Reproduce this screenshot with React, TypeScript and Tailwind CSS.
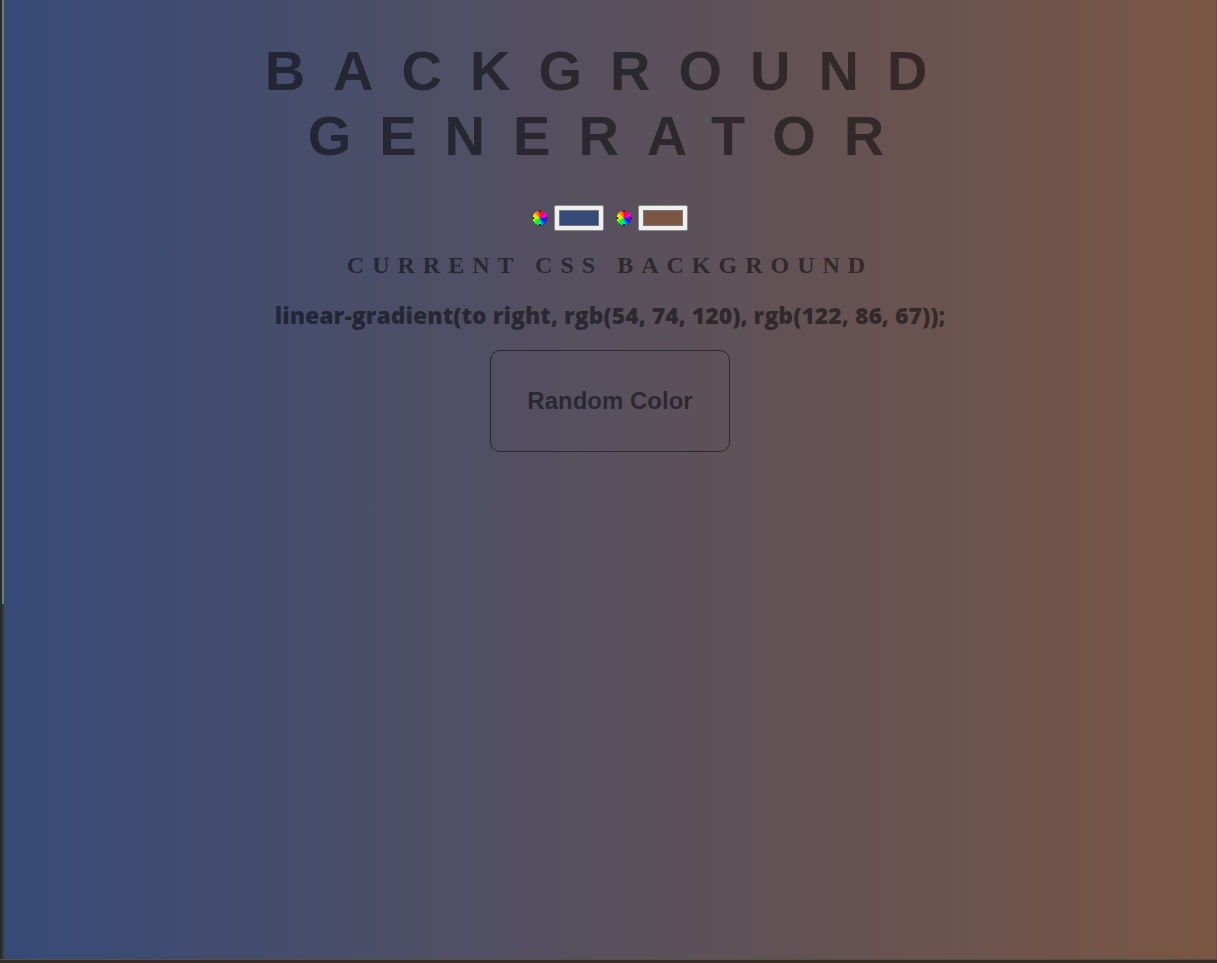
import { useState } from "react";

type Pair = [string, string];

const toRgb = (hex: string) => {
  const n = parseInt(hex.slice(1), 16);
  return `rgb(${n >> 16}, ${(n >> 8) & 255}, ${n & 255})`;
};

const randomHex = () =>
  "#" + Math.floor(Math.random() * 0x1000000).toString(16).padStart(6, "0");

const wheel = [
  "#ff0040", "#ff0090", "#ff00e0", "#c000ff", "#5000ff", "#0030ff",
  "#0090ff", "#00e0d0", "#00f060", "#20ff00", "#90ff00", "#e8ff00",
  "#ffd800", "#ff9000", "#ff4800",
];
const slice = (2 * Math.PI) / wheel.length;
const point = (angle: number) => `${8 + 7.3 * Math.cos(angle)} ${8 + 7.3 * Math.sin(angle)}`;

function ColorWheel() {
  return (
    <svg viewBox="0 0 16 16" className="size-4" aria-hidden="true">
      <ellipse cx="8" cy="12.8" rx="4.5" ry="3" fill="#000" opacity="0.6" />
      {wheel.map((fill, i) => {
        const start = i * slice - Math.PI / 2;
        return <path key={fill} fill={fill} d={`M8 8L${point(start)}A7.3 7.3 0 0 1 ${point(start + slice + 0.05)}Z`} />;
      })}
      <path d="M8 0.5v1.6M8 13.9v1.6M0.5 8h1.6M13.9 8h1.6" stroke="#1a1a1a" strokeWidth="2" />
    </svg>
  );
}

function ColorField({ label, value, onChange }: { label: string; value: string; onChange: (v: string) => void }) {
  return (
    <label className="flex items-center gap-1.5">
      <ColorWheel />
      <input
        type="color"
        aria-label={label}
        value={value}
        onChange={(e) => onChange(e.target.value)}
        className="block h-[26px] w-[50px] appearance-none rounded-[2px] border border-[#8c8a8c] bg-[#efefef] px-1 py-1 [&::-webkit-color-swatch-wrapper]:p-0 [&::-webkit-color-swatch]:rounded-none [&::-webkit-color-swatch]:border [&::-webkit-color-swatch]:border-solid [&::-webkit-color-swatch]:border-[#777777]"
      />
    </label>
  );
}

export default function App() {
  const [[left, right], setColors] = useState<Pair>(["#364a78", "#7a5643"]);
  const gradient = `linear-gradient(to right, ${toRgb(left)}, ${toRgb(right)})`;

  return (
    <div className="flex min-h-screen flex-col bg-[#352b24]">
      <div className="flex grow">
        <div className="w-0.5 bg-[#222d33]" />
        <div className="flex w-0.5 flex-col">
          <div className="grow-[604] bg-[#777777]" />
          <div className="grow-[355] bg-[#40382f]" />
        </div>
        <main
          className="flex grow flex-col items-center border-r border-[#555555] pt-[38px] text-center font-['Liberation_Sans',Arial,sans-serif] text-black/50"
          style={{ backgroundImage: gradient }}
        >
          <h1 className="max-w-[800px] text-[56px] leading-[65px] font-bold tracking-[0.5em] uppercase">
            Background Generator
          </h1>
          <div className="mt-[37px] flex gap-3">
            <ColorField label="Left color" value={left} onChange={(v) => setColors([v, right])} />
            <ColorField label="Right color" value={right} onChange={(v) => setColors([left, v])} />
          </div>
          <h2 className="mt-5 font-['Liberation_Serif',serif] text-2xl leading-7 font-bold tracking-[8px] uppercase">
            Current CSS Background
          </h2>
          <h3 className="mt-6 font-['Open_Sans',sans-serif] text-[23px] leading-6 font-extrabold">{gradient};</h3>
          <button
            type="button"
            onClick={() => setColors([randomHex(), randomHex()])}
            className="mt-[23px] h-[102px] w-60 rounded-[10px] border border-black/50 text-2xl font-bold"
          >
            Random Color
          </button>
        </main>
      </div>
      <div className="h-1 border-t border-[#555048]" />
    </div>
  );
}
